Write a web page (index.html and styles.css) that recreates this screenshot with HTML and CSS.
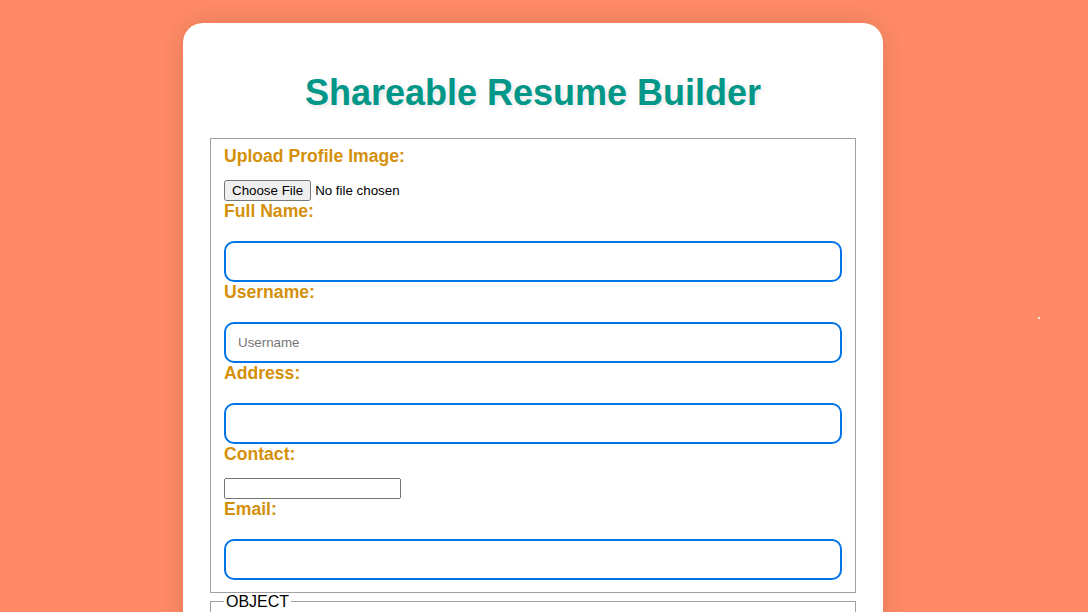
FILE: index.html
```html
<!DOCTYPE html>
<html lang="en">
<head>
<meta charset="utf-8">
<title>Shareable Resume Builder</title>
<link rel="stylesheet" href="styles.css">
</head>
<body>
<div class="card">
  <h1 class="title">Shareable Resume Builder</h1>
  <form class="form">
    <fieldset class="group">
      <label class="label" for="pic">Upload Profile Image:</label>
      <input class="file" type="file" id="pic">
      <label class="label" for="name">Full Name:</label>
      <input class="field" type="text" id="name">
      <label class="label" for="user">Username:</label>
      <input class="field" type="text" id="user" placeholder="Username">
      <label class="label" for="addr">Address:</label>
      <input class="field" type="text" id="addr">
      <label class="label" for="contact">Contact:</label>
      <input class="plain" type="tel" id="contact">
      <label class="label" for="email">Email:</label>
      <input class="field" type="email" id="email">
    </fieldset>
    <fieldset class="group">
      <legend class="legend">OBJECT</legend>
      <textarea class="area"></textarea>
    </fieldset>
  </form>
</div>
<span class="dot"></span>
</body>
</html>
```
FILE: styles.css
```css
html, body {
  margin: 0;
  padding: 0;
  height: 100%;
  overflow: hidden;
}
body {
  background: #ff8a65;
  font-family: "Liberation Sans", Arial, sans-serif;
  position: relative;
}
.card {
  width: 700px;
  box-sizing: border-box;
  margin: 23px 0 0 183px;
  background: #fff;
  border-radius: 20px;
  padding: 25px 25px 40px;
  box-shadow: 0 0 25px rgba(0, 0, 0, 0.12);
}
.title {
  margin: 24px 0 24px;
  text-align: center;
  font-size: 36px;
  font-weight: bold;
  color: #009688;
  text-shadow: 2px 2px 5px rgba(0, 0, 0, 0.1);
}
.form {
  margin: 0;
}
.group {
  margin: 0 2px;
  border: 1px solid #a0a0a0;
  padding: 6.6px 13px 12px;
}
.label {
  display: block;
  font-size: 17.6px;
  font-weight: bold;
  color: #d4900a;
  margin-bottom: 13px;
}
.file {
  display: block;
  font-family: Arial, "Liberation Sans", sans-serif;
  font-size: 13.33px;
}
.field {
  display: block;
  box-sizing: border-box;
  width: 100%;
  height: 41px;
  margin-top: 19px;
  padding: 10px 12px;
  border: 2px solid #0073e6;
  border-radius: 10px;
  font-family: "Liberation Sans", Arial, sans-serif;
  font-size: 13.33px;
  outline: none;
}
.field::placeholder {
  color: #757575;
}
.plain {
  display: block;
  box-sizing: border-box;
  width: 177px;
  height: 21px;
  font-family: "Liberation Sans", Arial, sans-serif;
  font-size: 13.33px;
}
.legend {
  font-size: 16px;
  padding: 0 2px;
  color: #000;
}
.area {
  display: block;
  width: 100%;
  box-sizing: border-box;
  height: 80px;
}
.dot {
  position: absolute;
  left: 1038px;
  top: 317px;
  width: 2px;
  height: 2px;
  background: #f2ece8;
}
```
